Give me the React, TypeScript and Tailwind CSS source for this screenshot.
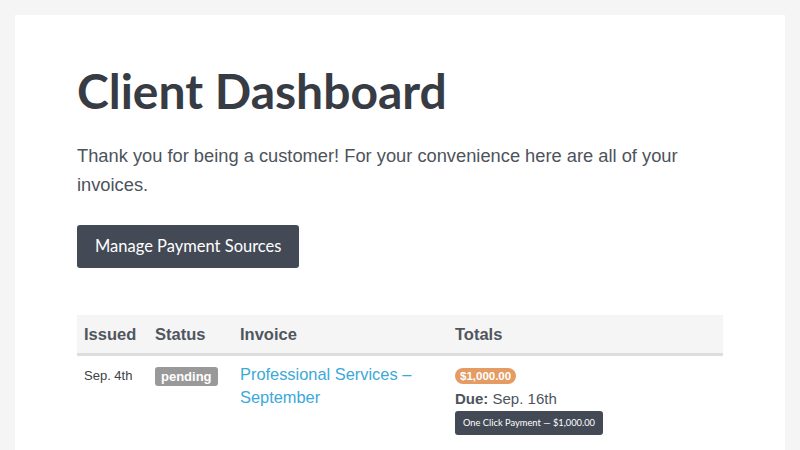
export default function App() {
  return (
    <div className="min-h-screen bg-[#f5f5f5] px-[15px] pt-[15px] font-['Liberation_Sans',Arial,sans-serif]">
      <div className="min-h-[435px] bg-white px-[62px] pt-[47px]">
        <h1 className="font-['Lato',sans-serif] text-[48px] font-bold leading-[1.2] text-[#373b43]">
          Client Dashboard
        </h1>

        <p className="mt-[21px] text-[18.3px] leading-[29px] text-[#4d535c]">
          Thank you for being a customer! For your convenience here are all of your invoices.
        </p>

        <button className="mt-[26px] rounded-[3px] bg-[#434a56] px-[18px] py-[10px] font-['Lato',sans-serif] text-[16.5px] leading-[23px] text-white">
          Manage Payment Sources
        </button>

        <table className="mt-[47px] w-full border-collapse text-left">
          <thead>
            <tr className="border-b-[3px] border-[#dddddd] bg-[#f5f5f5] text-[16.5px] font-bold leading-[22px] text-[#50565e]">
              <th className="w-[71px] px-[7px] py-[8px]">Issued</th>
              <th className="w-[85px] px-[7px] py-[8px]">Status</th>
              <th className="w-[215px] px-[7px] py-[8px]">Invoice</th>
              <th className="px-[7px] py-[8px]">Totals</th>
            </tr>
          </thead>
          <tbody>
            <tr className="align-top">
              <td className="px-[7px] pt-[10px] text-[13px] text-[#3d4148]">Sep. 4th</td>
              <td className="px-[7px] pt-[8px]">
                <span className="inline-block rounded-[3px] bg-[#999999] px-[6px] py-[1px] text-[13px] font-bold leading-[17px] text-white">
                  pending
                </span>
              </td>
              <td className="px-[7px] pt-[7px] text-[16.4px] leading-[23px] text-[#3aa9d8]">
                Professional Services –
                <br />
                September
              </td>
              <td className="px-[7px] pt-[7px]">
                <span className="inline-block rounded-full bg-[#e49b64] px-[5px] text-[11.5px] font-bold leading-[16px] text-white">
                  $1,000.00
                </span>
                <div className="mt-[2px] text-[15px] leading-[19px] text-[#4d535c]">
                  <span className="font-bold">Due:</span> Sep. 16th
                </div>
                <button className="mt-[3px] rounded-[3px] bg-[#434a56] px-[8px] py-[5px] font-['Lato',sans-serif] text-[9.3px] leading-[14px] text-white">
                  One Click Payment — $1,000.00
                </button>
              </td>
            </tr>
          </tbody>
        </table>
      </div>
    </div>
  )
}
